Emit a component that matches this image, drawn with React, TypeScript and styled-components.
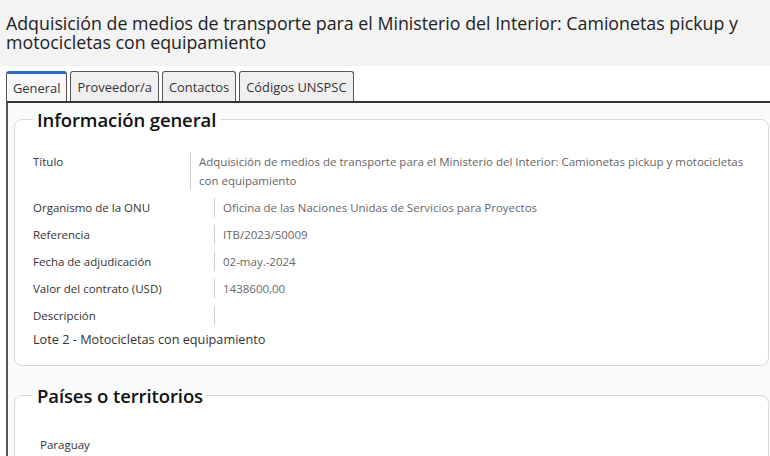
import styled, { createGlobalStyle } from "styled-components";

const GlobalStyle = createGlobalStyle`
  body {
    margin: 0;
    font-family: "Open Sans", "Noto Sans", sans-serif;
    color: #333;
    background: #fff;
    overflow: hidden;
  }
`;

type Row = { label: string; value: string; wide?: boolean };

const rows: Row[] = [
  {
    label: "Título",
    value:
      "Adquisición de medios de transporte para el Ministerio del Interior: Camionetas pickup y motocicletas con equipamiento",
  },
  { label: "Organismo de la ONU", value: "Oficina de las Naciones Unidas de Servicios para Proyectos", wide: true },
  { label: "Referencia", value: "ITB/2023/50009", wide: true },
  { label: "Fecha de adjudicación", value: "02-may.-2024", wide: true },
  { label: "Valor del contrato (USD)", value: "1438600,00", wide: true },
  { label: "Descripción", value: "", wide: true },
];

const tabs = ["General", "Proveedor/a", "Contactos", "Códigos UNSPSC"];

const App = () => {
  return (
    <Page>
      <GlobalStyle />
      <Header>
        <Title>
          Adquisición de medios de transporte para el Ministerio del Interior: Camionetas pickup y
          motocicletas con equipamiento
        </Title>
      </Header>
      <TabBar>
        {tabs.map((t, i) => (
          <Tab key={t} $active={i === 0}>
            {t}
          </Tab>
        ))}
      </TabBar>
      <Panel>
        <Fieldset>
          <Legend>Información general</Legend>
          <Rows>
            {rows.map((r) => (
              <InfoRow key={r.label} $wide={r.wide}>
                <Label>{r.label}</Label>
                <Value>{r.value}</Value>
              </InfoRow>
            ))}
          </Rows>
          <Description>Lote 2 - Motocicletas con equipamiento</Description>
        </Fieldset>
        <Fieldset>
          <Legend>Países o territorios</Legend>
          <Country>Paraguay</Country>
        </Fieldset>
      </Panel>
    </Page>
  );
};

export default App;

const Page = styled.div`
  width: 770px;
  height: 456px;
  overflow: hidden;
`;
const Header = styled.header`
  background: #f3f3f3;
  padding: 14px 6px 14px;
`;
const Title = styled.h1`
  margin: 0;
  font-size: 17.8px;
  line-height: 19px;
  font-weight: 400;
  color: #222;
`;
const TabBar = styled.nav`
  display: flex;
  gap: 3px;
  padding: 5px 6px 0;
`;
const Tab = styled.div<{ $active?: boolean }>`
  height: 30px;
  box-sizing: border-box;
  padding: 0 6px;
  display: flex;
  align-items: center;
  font-size: 12.9px;
  color: #333;
  border: 1px solid #555;
  border-bottom: none;
  border-radius: 3px 3px 0 0;
  background: ${(p) => (p.$active ? "#f7f8fa" : "#efefef")};
  border-top: ${(p) => (p.$active ? "3px solid #2a6cc4" : "1px solid #555")};
`;
const Panel = styled.section`
  margin-left: 6px;
  width: 780px;
  border-top: 2px solid #333;
  border-left: 2px solid #555;
  background: #f9fafc;
  padding: 4px 0 0 6px;
  display: flex;
  flex-direction: column;
  gap: 17px;
`;
const Fieldset = styled.fieldset`
  margin: 0;
  width: 755px;
  box-sizing: border-box;
  border: 1px solid #d8d8d8;
  border-radius: 8px;
  background: #fff;
  padding: 20px 18px 17px 18px;
`;
const Legend = styled.legend`
  font-size: 18.5px;
  letter-spacing: -0.1px;
  font-weight: 600;
  color: #111;
  padding: 0 4px;
  margin-left: 0;
`;
const Rows = styled.div`
  display: flex;
  flex-direction: column;
  gap: 8px;
`;
const InfoRow = styled.div<{ $wide?: boolean }>`
  display: grid;
  grid-template-columns: ${(p) => (p.$wide ? "181px" : "157px")} 1fr;
  font-size: 11.5px;
  line-height: 19px;
`;
const Label = styled.div`
  color: #333;
`;
const Value = styled.div`
  color: #666;
  border-left: 1px solid #ccc;
  padding-left: 8px;
  min-height: 19px;
  padding-right: 4px;
`;
const Description = styled.p`
  margin: 5px 0 0;
  font-size: 12.7px;
  color: #333;
`;
const Country = styled.p`
  margin: 9px 0 0 7px;
  font-size: 11.5px;
  color: #333;
`;
